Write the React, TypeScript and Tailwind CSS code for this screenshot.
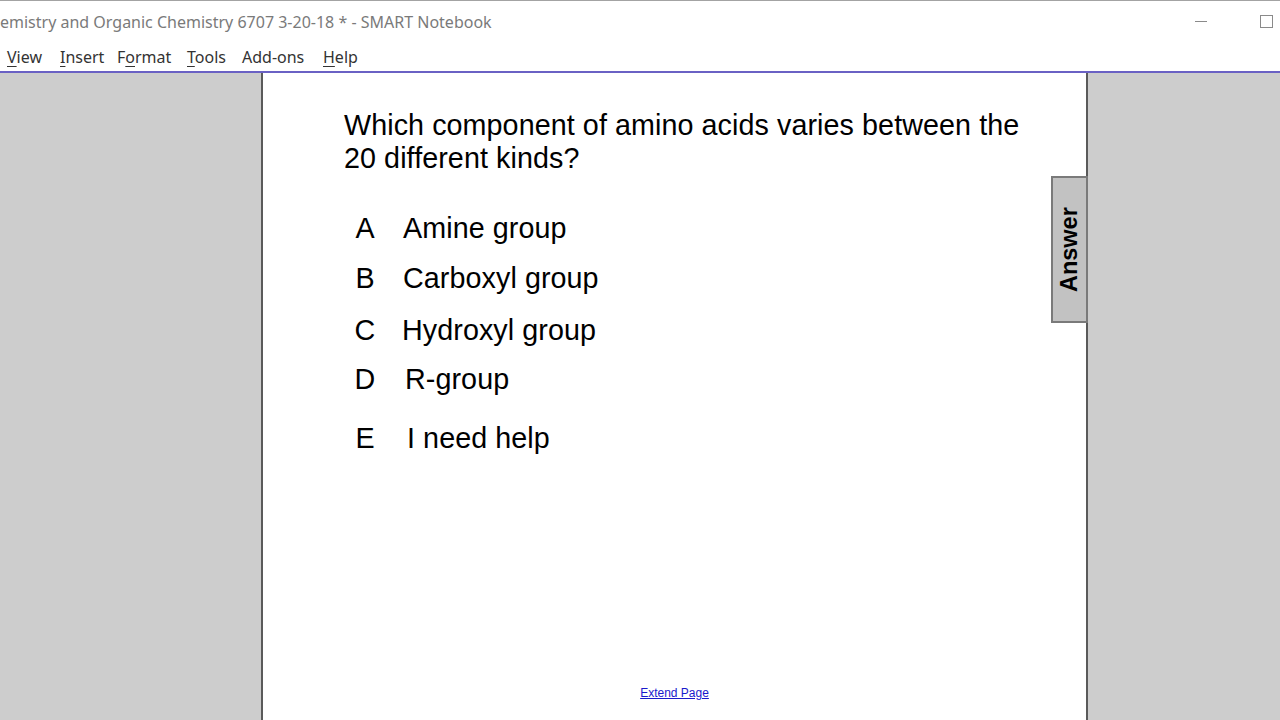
import React from "react";

const options = [
  { l: "A", t: "Amine group", mt: "mt-[37px]", gap: "pl-[17px]" },
  { l: "B", t: "Carboxyl group", mt: "mt-[17px]", gap: "pl-[17px]" },
  { l: "C", t: "Hydroxyl group", mt: "mt-[19px]", gap: "pl-[16px]" },
  { l: "D", t: "R-group", mt: "mt-[16px]", gap: "pl-[19px]" },
  { l: "E", t: "I need help", mt: "mt-[26px]", gap: "pl-[21px]" },
];

function Menu({ pre, u, post, w }: { pre?: string; u?: string; post?: string; w: string }) {
  return (
    <span className={w}>
      {pre}
      {u && <span className="underline underline-offset-[3px] decoration-1">{u}</span>}
      {post}
    </span>
  );
}

export default function App() {
  return (
    <div className="w-[1280px] h-[720px] overflow-hidden flex flex-col bg-white">
      {/* title bar */}
      <div className="h-[42px] shrink-0 border-t border-[#a3a3a3] flex items-center justify-between bg-white">
        <div
          className="text-[16px] text-[#7a7a7a] whitespace-nowrap"
          style={{ fontFamily: '"Noto Sans", "Open Sans", sans-serif' }}
        >
          emistry and Organic Chemistry 6707 3-20-18 * - SMART Notebook
        </div>
        <div className="flex items-center h-full">
          <div className="w-[12px] h-[1px] bg-[#8a8a8a] mr-[53px] -mt-[1px]" />
          <div className="w-[13px] h-[13px] border border-[#8a8a8a] mr-[7px]" />
        </div>
      </div>
      {/* menu bar */}
      <div
        className="h-[29px] shrink-0 flex items-center pl-[7px] pt-[1px] text-[16px] text-[#333] bg-white"
        style={{ fontFamily: '"Noto Sans", "Open Sans", sans-serif' }}
      >
        <Menu w="w-[53px]" u="V" post="iew" />
        <Menu w="w-[57px]" u="I" post="nsert" />
        <Menu w="w-[70px]" pre="F" u="o" post="rmat" />
        <Menu w="w-[55px]" u="T" post="ools" />
        <Menu w="w-[81px]" pre="Add-ons" />
        <Menu w="w-[50px]" u="H" post="elp" />
      </div>
      <div className="h-[2px] shrink-0 bg-[#6a61c4]" />
      {/* workspace */}
      <div className="flex-1 flex bg-[#cdcdcd] min-h-0">
        <div className="w-[261px] shrink-0" />
        <div
          className="w-[827px] shrink-0 bg-white border-l-2 border-r-2 border-[#5a5a5a] relative flex flex-col"
          style={{ fontFamily: '"Liberation Sans", Arial, sans-serif' }}
        >
          <div className="pl-[81px] pt-[36px] text-[28.7px] leading-[33px] text-black tracking-[0.08px]">
            <div>
              Which component of amino acids varies between the
              <br />
              20 different kinds?
            </div>
            {options.map((o) => (
              <div key={o.l} className={`flex items-center ${o.mt}`}>
                <div className="w-[42px] text-center">{o.l}</div>
                <div className={o.gap}>{o.t}</div>
              </div>
            ))}
          </div>
          <div className="mt-auto pb-[20px] flex justify-center">
            <span className="text-[12px] leading-[14px] text-[#1a1acc] underline">Extend Page</span>
          </div>
          {/* Answer tab */}
          <div className="absolute top-[103px] right-[-2px] w-[37px] h-[147px] bg-[#c2c2c2] border-2 border-[#7a7a7a] flex items-center justify-center">
            <div className="-rotate-90 font-bold text-[23.5px] text-black whitespace-nowrap">Answer</div>
          </div>
        </div>
        <div className="flex-1" />
      </div>
    </div>
  );
}
